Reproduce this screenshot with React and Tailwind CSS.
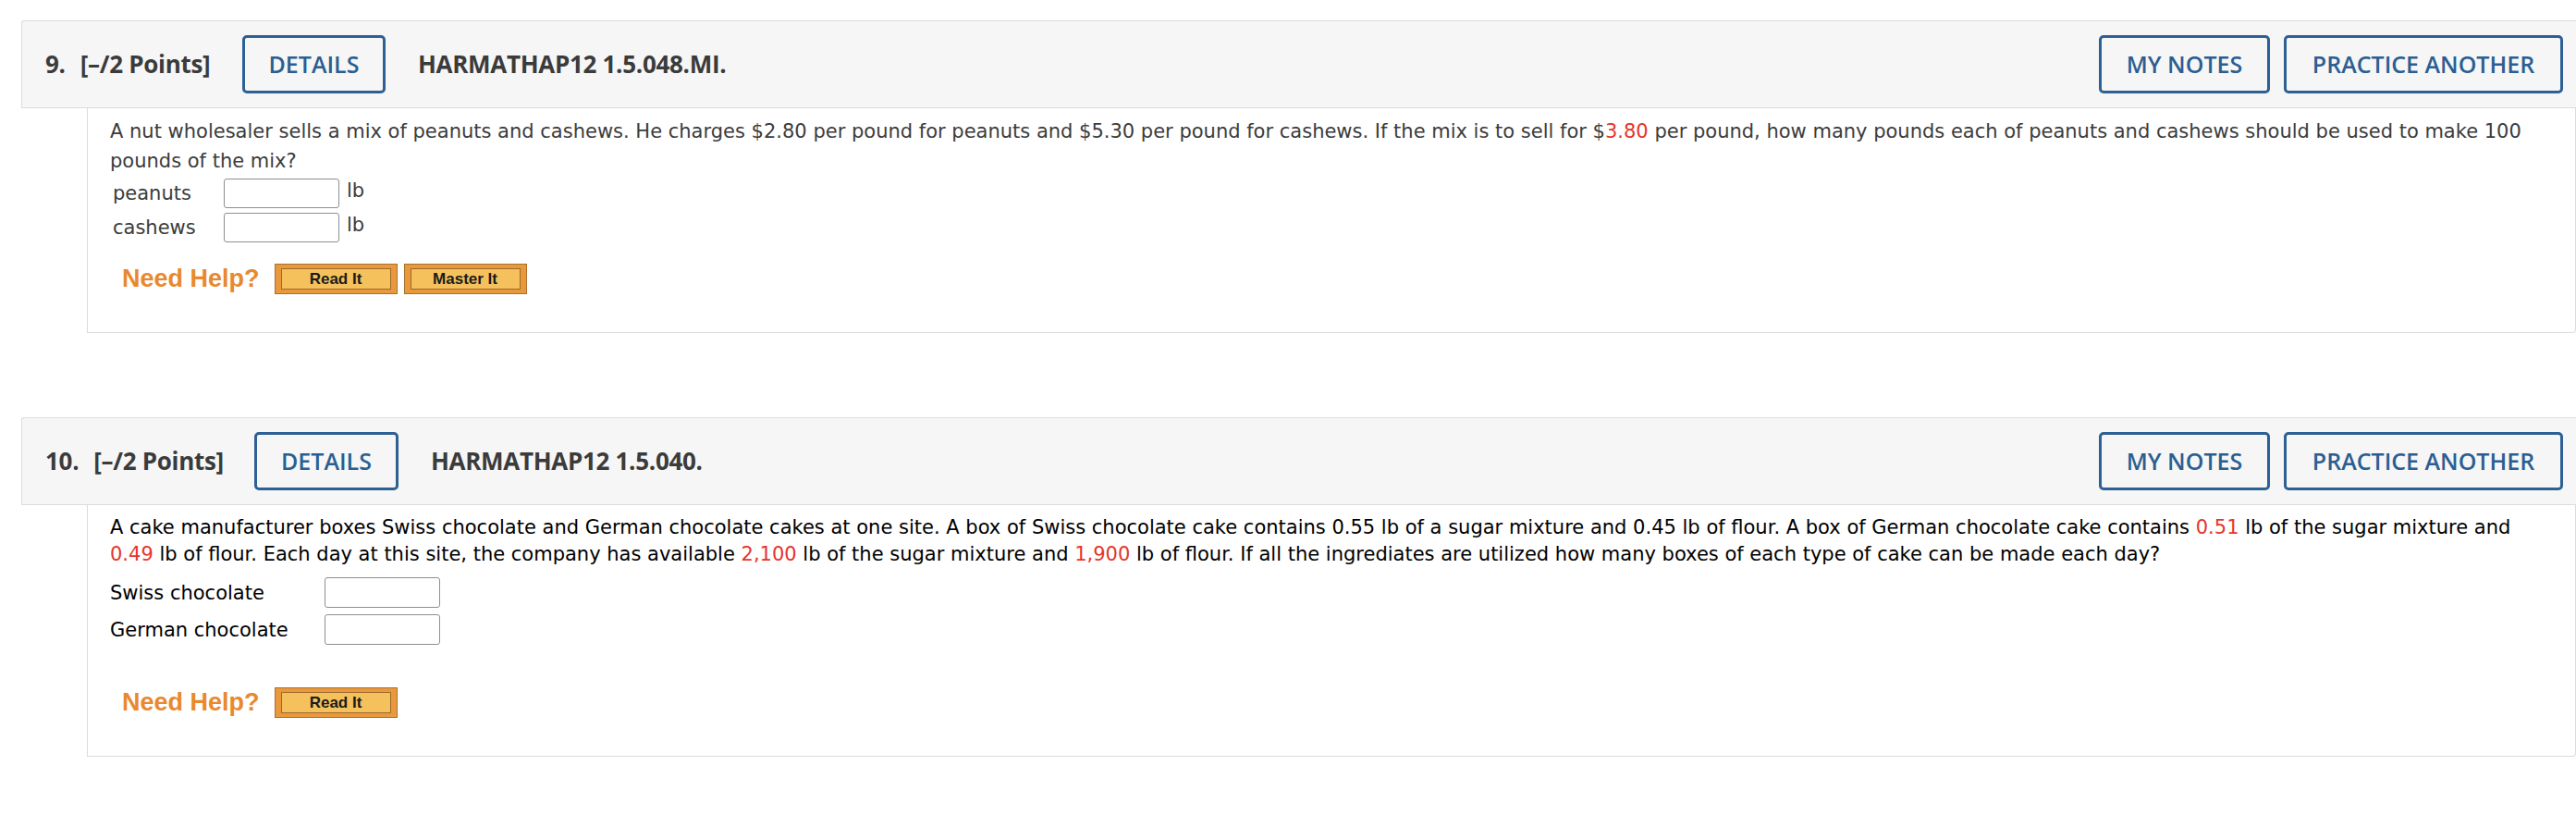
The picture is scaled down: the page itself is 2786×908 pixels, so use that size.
import React from "react";

function HeaderButton({ children, w }) {
  return (
    <div
      className={`flex items-center justify-center h-[63px] ${w} rounded-[5px] border-[3px] border-[#2d6094] text-[25px] font-semibold text-[#2b5e92] font-['Open_Sans',sans-serif]`}
    >
      {children}
    </div>
  );
}

function QuestionHeader({ num, code, detailsW, pointsW }) {
  return (
    <div className="flex items-center h-[95px] border border-r-0 border-[#dcdcdc] rounded-tl-[3px] bg-[#f6f6f6] pl-[25px] pr-[14px] font-['Open_Sans',sans-serif] text-[#3b3b3b]">
      <div className={`flex items-center ${pointsW} text-[26px] font-bold tracking-[-0.3px]`}>
        <span>{num}.</span>
        <span className="ml-[16px]">[–/2 Points]</span>
      </div>
      <HeaderButton w={detailsW}>DETAILS</HeaderButton>
      <div className="ml-[35px] text-[26px] font-bold tracking-[-0.3px]">{code}</div>
      <div className="ml-auto flex items-center gap-[15px]">
        <HeaderButton w="w-[185px]">MY NOTES</HeaderButton>
        <HeaderButton w="w-[302px]">PRACTICE ANOTHER</HeaderButton>
      </div>
    </div>
  );
}

function HelpButton({ children }) {
  return (
    <div className="h-[33px] w-[133px] border border-[#a8702e] bg-[#e9993c] p-[4px_6px]">
      <div className="flex h-full w-full items-center justify-center border border-[#9c6a2c] bg-[#f4c15d] font-['Liberation_Sans',Arial,sans-serif] text-[17px] font-bold text-[#1b1b1b]">
        {children}
      </div>
    </div>
  );
}

function NeedHelp({ master }) {
  return (
    <div className="flex items-center h-[33px] pl-[13px]">
      <span className="font-['Liberation_Sans',Arial,sans-serif] text-[27px] font-bold text-[#e8892e] mr-[16px]">
        Need Help?
      </span>
      <HelpButton>Read It</HelpButton>
      {master && (
        <div className="ml-[7px]">
          <HelpButton>Master It</HelpButton>
        </div>
      )}
    </div>
  );
}

function Red({ children }) {
  return <span className="text-[#e5352a]">{children}</span>;
}

function AnswerBox({ h }) {
  return <div className={`w-[125px] ${h} rounded-[3px] border border-[#8f8f8f] bg-white`} />;
}

export default function App() {
  return (
    <div className="min-h-[908px] w-full overflow-hidden bg-white pt-[22px] pl-[23px]">
      {/* question 9 */}
      <QuestionHeader num="9" code="HARMATHAP12 1.5.048.MI." detailsW="w-[155px]" pointsW="w-[213px]" />
      <div className="ml-[71px] border-l border-b border-r border-[#dcdcdc] rounded-br-[4px] pl-[24px] pt-[9px] pb-[41px] font-['DejaVu_Sans',Verdana,sans-serif] text-[21px] text-[#3c3c3c]">
        <p className="leading-[32px] whitespace-nowrap">
          A nut wholesaler sells a mix of peanuts and cashews. He charges $2.80 per pound for peanuts and $5.30 per
          pound for cashews. If the mix is to sell for $<Red>3.80</Red> per pound, how many pounds each of peanuts and
          cashews should be used to make 100
          <br />
          pounds of the mix?
        </p>
        <div className="flex items-center h-[37px]">
          <span className="w-[123px] pl-[3px] pt-[3px]">peanuts</span>
          <AnswerBox h="h-[32px]" />
          <span className="ml-[8px] self-start pt-[4px] leading-[24px]">lb</span>
        </div>
        <div className="flex items-center h-[37px]">
          <span className="w-[123px] pl-[3px] pt-[3px]">cashews</span>
          <AnswerBox h="h-[32px]" />
          <span className="ml-[8px] self-start pt-[4px] leading-[24px]">lb</span>
        </div>
        <div className="mt-[21px]">
          <NeedHelp master />
        </div>
      </div>

      {/* question 10 */}
      <div className="mt-[91px]">
        <QuestionHeader num="10" code="HARMATHAP12 1.5.040." detailsW="w-[156px]" pointsW="w-[226px]" />
      </div>
      <div className="ml-[71px] border-l border-b border-r border-[#dcdcdc] rounded-br-[4px] pl-[24px] pt-[10px] pb-[41px] font-['DejaVu_Sans',Verdana,sans-serif] text-[21px] text-black">
        <p className="leading-[29px] whitespace-nowrap">
          A cake manufacturer boxes Swiss chocolate and German chocolate cakes at one site. A box of Swiss chocolate
          cake contains 0.55 lb of a sugar mixture and 0.45 lb of flour. A box of German chocolate cake contains{" "}
          <Red>0.51</Red> lb of the sugar mixture and
          <br />
          <Red>0.49</Red> lb of flour. Each day at this site, the company has available <Red>2,100</Red> lb of the
          sugar mixture and <Red>1,900</Red> lb of flour. If all the ingrediates are utilized how many boxes of each
          type of cake can be made each day?
        </p>
        <div className="mt-[6px] flex items-center h-[40px]">
          <span className="w-[232px] pt-[3px]">Swiss chocolate</span>
          <AnswerBox h="h-[33px]" />
        </div>
        <div className="flex items-center h-[40px]">
          <span className="w-[232px] pt-[3px]">German chocolate</span>
          <AnswerBox h="h-[33px]" />
        </div>
        <div className="mt-[43px]">
          <NeedHelp />
        </div>
      </div>
    </div>
  );
}
